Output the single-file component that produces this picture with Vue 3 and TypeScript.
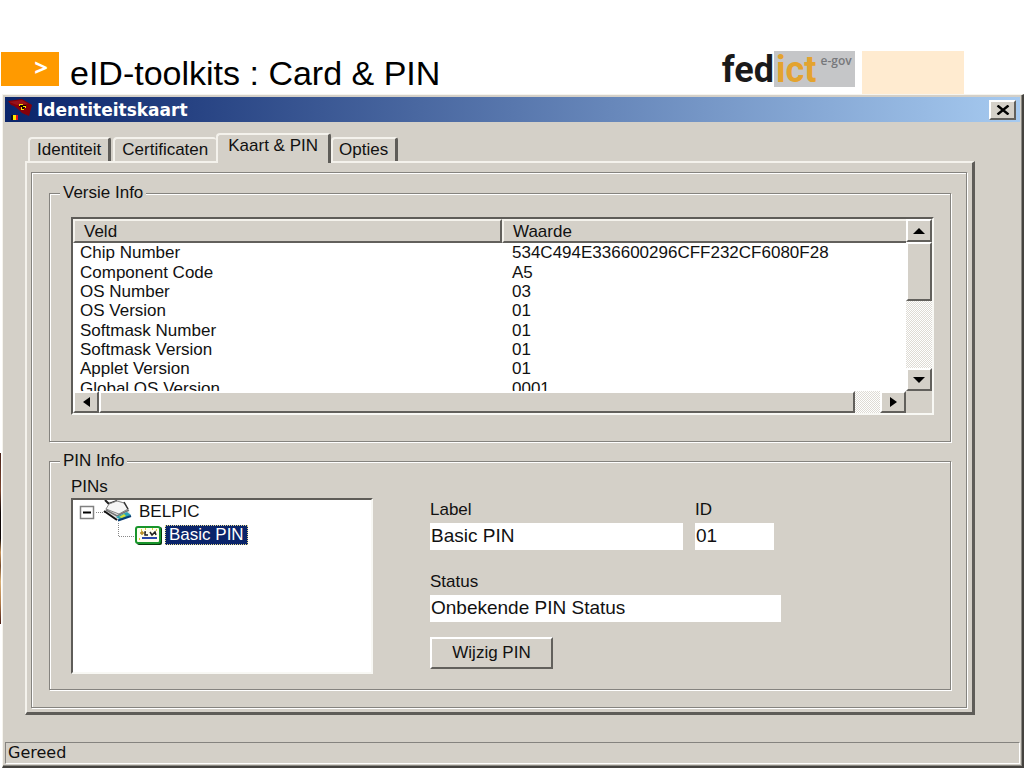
<script setup lang="ts">
import { ref } from 'vue'

interface Row {
  field: string
  value: string
}

const tabs: string[] = ['Identiteit', 'Certificaten', 'Kaart & PIN', 'Opties']
const active = ref<string>('Kaart & PIN')

const rows: Row[] = [
  { field: 'Chip Number', value: '534C494E336600296CFF232CF6080F28' },
  { field: 'Component Code', value: 'A5' },
  { field: 'OS Number', value: '03' },
  { field: 'OS Version', value: '01' },
  { field: 'Softmask Number', value: '01' },
  { field: 'Softmask Version', value: '01' },
  { field: 'Applet Version', value: '01' },
  { field: 'Global OS Version', value: '0001' },
]

const label = ref('Basic PIN')
const id = ref('01')
const status = ref('Onbekende PIN Status')
</script>

<template>
  <div class="page">
    <header class="banner">
      <div class="marker">&gt;</div>
      <h1>eID-toolkits : Card &amp; PIN</h1>
      <div class="logo">
        <span class="fed">fed</span>
        <span class="logo-box"><span class="ict">ict</span><span class="egov">e-gov</span></span>
      </div>
      <div class="swatch"></div>
    </header>

    <div class="stage">
      <div class="sliver"></div>
      <main class="window">
        <div class="titlebar">
          <svg class="app-icon" viewBox="0 0 26 24" aria-hidden="true">
            <path d="M0 3 L14 1 L24 7 L21 18 L14 15 L10 11 L6 8 L3 7 Z" fill="#85000a" />
            <path d="M1 4 L14 2 L20 6 L9 7 Z" fill="#98121a" />
            <path d="M11 6h4v1h3v3h-2v2h-3v-3h-2z" fill="#160000" />
            <path d="M11 6h4v1h-3v1h-1zM15 8h3v2h-1v-1h-2zM13 9h1v2h2v1h-3z" fill="#ffe000" />
            <rect x="3" y="17" width="3" height="5" fill="#111" />
            <rect x="5" y="17" width="3" height="5" fill="#ffe600" />
            <rect x="8" y="17" width="2" height="5" fill="#e8141c" />
          </svg>
          <span class="caption">Identiteitskaart</span>
          <button class="raised close" type="button" aria-label="Sluiten">
            <svg viewBox="0 0 14 10" aria-hidden="true">
              <path d="M1.500 0.500 L12.500 9.500 M12.500 0.500 L1.500 9.500" stroke="#000" stroke-width="2.400" />
            </svg>
          </button>
        </div>

        <div class="body">
          <div class="tabs" role="tablist">
            <button
              v-for="t in tabs"
              :key="t"
              type="button"
              role="tab"
              class="tab"
              :class="{ selected: t === active }"
              :aria-selected="t === active"
              @click="active = t"
            >{{ t }}</button>
          </div>

          <div class="panel">
            <div class="frame">
              <fieldset class="group versie">
                <legend>Versie Info</legend>
                <div class="list">
                  <div class="view">
                    <table>
                      <thead>
                        <tr><th>Veld</th><th>Waarde</th></tr>
                      </thead>
                      <tbody>
                        <tr v-for="r in rows" :key="r.field">
                          <td>{{ r.field }}</td>
                          <td>{{ r.value }}</td>
                        </tr>
                      </tbody>
                    </table>
                  </div>
                  <div class="vbar">
                    <button class="raised arrow" type="button" aria-label="Omhoog">
                      <svg viewBox="0 0 12 6" width="12" height="6"><path d="M0 6 L6 0 L12 6Z" /></svg>
                    </button>
                    <div class="raised vthumb"></div>
                    <div class="fill"></div>
                    <button class="raised arrow" type="button" aria-label="Omlaag">
                      <svg viewBox="0 0 12 6" width="12" height="6"><path d="M0 0 L12 0 L6 6Z" /></svg>
                    </button>
                  </div>
                  <div class="hbar">
                    <button class="raised arrow" type="button" aria-label="Links">
                      <svg viewBox="0 0 7 10" width="7" height="10"><path d="M7 0 L0 5 L7 10Z" /></svg>
                    </button>
                    <div class="raised hthumb"></div>
                    <div class="hgap"></div>
                    <button class="raised arrow" type="button" aria-label="Rechts">
                      <svg viewBox="0 0 7 10" width="7" height="10"><path d="M0 0 L7 5 L0 10Z" /></svg>
                    </button>
                  </div>
                </div>
              </fieldset>

              <fieldset class="group pin">
                <legend>PIN Info</legend>
                <div class="pin-cols">
                  <div class="pins">
                    <div id="pins-label" class="pins-label">PINs</div>
                    <ul class="tree" role="tree" aria-labelledby="pins-label">
                      <li role="treeitem" aria-expanded="true" class="node">
                        <svg class="ico-root" viewBox="0 0 54 24" aria-hidden="true">
                          <rect x="1.500" y="6.500" width="13" height="12" fill="#fff" stroke="#808080" stroke-width="1.500" />
                          <path d="M4 12.500h8" stroke="#000" stroke-width="2" />
                          <path d="M17 12.500h9" stroke="#888" stroke-dasharray="1 1" />
                          <path d="M28 2 L40 0 L47 4 L50 11 L52 16 L40 21 L26 12 L26 9 L30 6Z" fill="#e2e2e2" />
                          <path d="M26 0 L30 4 L38 1" fill="none" stroke="#222" stroke-width="2" />
                          <path d="M30 4 L27 9 L40 14 L49 9 L45 3 L38 1Z" fill="#f6f6f6" stroke="#888" />
                          <path d="M45 2 L49 9" fill="none" stroke="#333" stroke-width="1.500" />
                          <path d="M27 10 L38 16 L50 10" fill="none" stroke="#777" stroke-width="1.500" />
                          <path d="M25 11 L38 20" fill="none" stroke="#111" stroke-width="2" />
                          <path d="M37 17 L48 12 L52 15 L42 20Z" fill="#2aa5b4" />
                          <path d="M40 17 L45 14 L47 16 L43 18Z" fill="#d5dd35" />
                          <path d="M39 20.500 L52 16" stroke="#063c72" stroke-width="2" />
                        </svg>
                        <span class="node-text">BELPIC</span>
                      </li>
                      <li role="treeitem" aria-selected="true" class="node">
                        <svg class="ico-leaf" viewBox="0 0 84 24" aria-hidden="true">
                          <path d="M39.500 0v13.500h17" fill="none" stroke="#888" stroke-dasharray="1 1" />
                          <rect x="58" y="4" width="25" height="18" rx="2" fill="#053a0c" />
                          <rect x="57" y="4" width="24" height="16" rx="2" fill="#fffef0" stroke="#18952b" stroke-width="2" />
                          <path d="M62 7h1M66 6h1M73 6h1M77 7h1M60 16h1" stroke="#d8cf3d" stroke-width="2" />
                          <path d="M61 10h4M63 8v4" stroke="#b78a20" stroke-width="1.500" />
                          <path d="M67 9h-1v3h3M71 9l2 3l3-3l1 3" fill="none" stroke="#222" stroke-width="1.500" />
                          <path d="M63 15h15" stroke="#2746ac" stroke-width="2" />
                        </svg>
                        <span class="node-text chosen">Basic PIN</span>
                      </li>
                    </ul>
                  </div>

                  <form class="fields" @submit.prevent>
                    <div class="line">
                      <div class="field wide">
                        <label for="f-label">Label</label>
                        <input id="f-label" v-model="label" type="text" readonly />
                      </div>
                      <div class="field small">
                        <label for="f-id">ID</label>
                        <input id="f-id" v-model="id" type="text" readonly />
                      </div>
                    </div>
                    <div class="field full">
                      <label for="f-status">Status</label>
                      <input id="f-status" v-model="status" type="text" readonly />
                    </div>
                    <button class="raised change" type="button">Wijzig PIN</button>
                  </form>
                </div>
              </fieldset>
            </div>
          </div>
        </div>

        <footer class="statusbar">Gereed</footer>
      </main>
    </div>
  </div>
</template>

<style>
html,
body {
  background: #fff;
}
</style>

<style scoped>
* {
  box-sizing: border-box;
}
.page {
  min-height: 100vh;
  display: flex;
  flex-direction: column;
  font: 17px/20px "Liberation Sans", Arial, sans-serif;
  color: #111;
}
.banner {
  display: flex;
  align-items: flex-start;
  height: 94px;
  padding: 51px 60px 0 1px;
}
.marker {
  width: 58px;
  height: 34px;
  margin-top: 1px;
  padding-right: 11px;
  background: #ff9a00;
  color: #fff;
  font: bold 24px/30px "Open Sans", sans-serif;
  text-align: right;
}
h1 {
  margin: 2px auto 0 11px;
  font-size: 34px;
  font-weight: 400;
  line-height: 40px;
  color: #000;
  white-space: nowrap;
}
.logo {
  display: flex;
  height: 36px;
  margin-right: 7px;
  font: bold 36px/38px Roboto, "Open Sans", sans-serif;
  color: #1a1a1a;
}
.logo-box {
  display: flex;
  width: 81px;
  background: #c5c6c8;
}
.ict {
  color: #e3a32f;
  padding-left: 2px;
}
.egov {
  margin-left: 4px;
  font: 600 12px/20px "Open Sans", sans-serif;
  color: #77787b;
  white-space: nowrap;
}
.swatch {
  width: 102px;
  height: 43px;
  background: #ffebd0;
}
.stage {
  flex: 1;
  display: flex;
}
.sliver {
  width: 1px;
  height: 171px;
  margin: 359px 1px 0 0;
  background: linear-gradient(#4a2218, #7c4630 22%, #0c0504 35%, #0c0504 50%, #c9955c 58%, #7a5030 66%, #d9b077 75%, #b07a48 88%, #4a1c14);
}
.window {
  flex: 1;
  display: flex;
  flex-direction: column;
  padding: 2px;
  background: #d4d0c8;
  border: 1px solid #f6f4ee;
  border-right: 2px solid #45433f;
  border-bottom: 2px solid #45433f;
  box-shadow: inset -1px -1px #8a8882;
}
.titlebar {
  display: flex;
  align-items: center;
  height: 25px;
  padding: 0 4px 0 3px;
  background: linear-gradient(90deg, #0a246a, #a6caf0);
}
.app-icon {
  width: 26px;
  height: 24px;
}
.caption {
  flex: 1;
  margin-left: 3px;
  color: #fff;
  font: bold 17px/24px "DejaVu Sans", sans-serif;
}
.raised {
  background: #d4d0c8;
  border: 2px solid;
  border-color: #fff #62605c #62605c #fff;
  border-radius: 0;
  padding: 0;
  color: #111;
  font: inherit;
}
.close {
  display: flex;
  align-items: center;
  justify-content: center;
  width: 27px;
  height: 20px;
}
.close svg {
  width: 14px;
  height: 10px;
}
.body {
  flex: 1;
  padding: 11px 45px 0 20px;
}
.tabs {
  display: flex;
  align-items: flex-end;
  height: 28px;
  padding-left: 3px;
}
.tab {
  height: 24px;
  margin-right: 2px;
  padding: 0 7px;
  background: #d4d0c8;
  border: 2px solid #f4f2ec;
  border-bottom: 0;
  border-right: 3px solid #5e5c58;
  border-radius: 4px 3px 0 0;
  color: #111;
  font: inherit;
  line-height: 20px;
}
.tab:nth-child(2) {
  margin-right: 0;
  padding-right: 8px;
  border-right-width: 0;
}
.tab.selected {
  position: relative;
  height: 30px;
  margin: 0 0 -2px;
  padding: 0 10px 6px;
}
.tab:last-child {
  padding: 0 7px 0 6px;
}
.panel {
  padding: 9px 5px 4px 4px;
  border: 2px solid #f4f2ec;
  border-right: 3px solid #5e5c58;
  border-bottom: 3px solid #5e5c58;
}
.frame,
.group {
  border: 1px solid #85837f;
  box-shadow: 1px 1px #fff, inset 1px 1px #fff;
}
.frame {
  padding: 10px 15px 17px 17px;
}
.group {
  min-width: 0;
  margin: 0;
  padding: 0 16px 0 21px;
}
.group legend {
  margin-left: -11px;
  padding: 0 3px;
  background: #d4d0c8;
}
.versie {
  padding-top: 14px;
  padding-bottom: 26px;
}
.pin {
  margin-top: 9px;
  padding-bottom: 15px;
}
.list {
  display: grid;
  grid-template: 172px 22px / minmax(0, 1fr) 26px;
  border: 2px solid;
  border-color: #5e5c58 #f8f8f4 #f8f8f4 #5e5c58;
}
.view {
  background: #fff;
  overflow: hidden;
}
table {
  width: 100%;
  table-layout: fixed;
  border-collapse: separate;
  border-spacing: 0;
}
th {
  height: 24px;
  padding: 2px 0 0 9px;
  background: #d4d0c8;
  border: 2px solid;
  border-color: #f4f2ec #62605c #62605c #f4f2ec;
  font-weight: 400;
  line-height: 18px;
  text-align: left;
}
th:first-child {
  width: 51.500%;
}
th:last-child {
  border-right: 0;
}
td {
  height: 19px;
  padding: 0 0 0 7px;
  line-height: 19px;
  white-space: nowrap;
}
tr:nth-child(3n + 2) td {
  height: 20px;
}
td:last-child {
  padding-left: 10px;
}
.vbar,
.hbar {
  display: flex;
  background: repeating-conic-gradient(#fff 0 25%, #dedbd4 0 50%) 0 0 / 2px 2px;
}
.vbar {
  flex-direction: column;
}
.arrow {
  display: flex;
  align-items: center;
  justify-content: center;
  flex: none;
}
.vbar .arrow {
  height: 23px;
}
.hbar .arrow {
  width: 26px;
}
.vthumb {
  height: 59px;
}
.fill {
  flex: 1;
}
.hthumb {
  flex: 1;
}
.hgap {
  width: 25px;
}
.pin-cols {
  display: flex;
  gap: 57px;
}
.pins {
  width: 302px;
}
.pins-label {
  margin-top: 5px;
  line-height: 22px;
}
.tree {
  height: 176px;
  margin: 0;
  padding: 0 0 0 6px;
  list-style: none;
  background: #fff;
  border: 2px solid;
  border-color: #5e5c58 #f8f8f4 #f8f8f4 #5e5c58;
}
.node {
  display: flex;
  align-items: center;
  height: 23px;
}
.ico-root {
  width: 54px;
  height: 24px;
}
.ico-leaf {
  width: 84px;
  height: 24px;
}
.node-text {
  padding: 0 4px;
  margin-left: 2px;
}
.chosen {
  background: #0a246a;
  color: #fff;
  outline: 1px dotted #e4d88c;
  outline-offset: -1px;
}
.fields {
  display: flex;
  flex-direction: column;
  align-items: flex-start;
  padding-top: 29px;
}
.line {
  display: flex;
  gap: 12px;
  margin-bottom: 22px;
}
.field {
  display: flex;
  flex-direction: column;
}
.field label {
  height: 23px;
}
.field input {
  width: 100%;
  height: 27px;
  padding: 0 0 2px 1px;
  background: #fff;
  border: 0;
  border-radius: 0;
  color: #111;
  font: 19px/24px "Liberation Sans", Arial, sans-serif;
}
.wide {
  width: 253px;
}
.small {
  width: 79px;
}
.full {
  width: 351px;
}
.change {
  width: 123px;
  height: 32px;
  margin-top: 15px;
}
.statusbar {
  height: 22px;
  padding-left: 2px;
  border: 1px solid;
  border-color: #85837f #fff #fff #85837f;
  font: 16px/20px "DejaVu Sans", sans-serif;
}
</style>
